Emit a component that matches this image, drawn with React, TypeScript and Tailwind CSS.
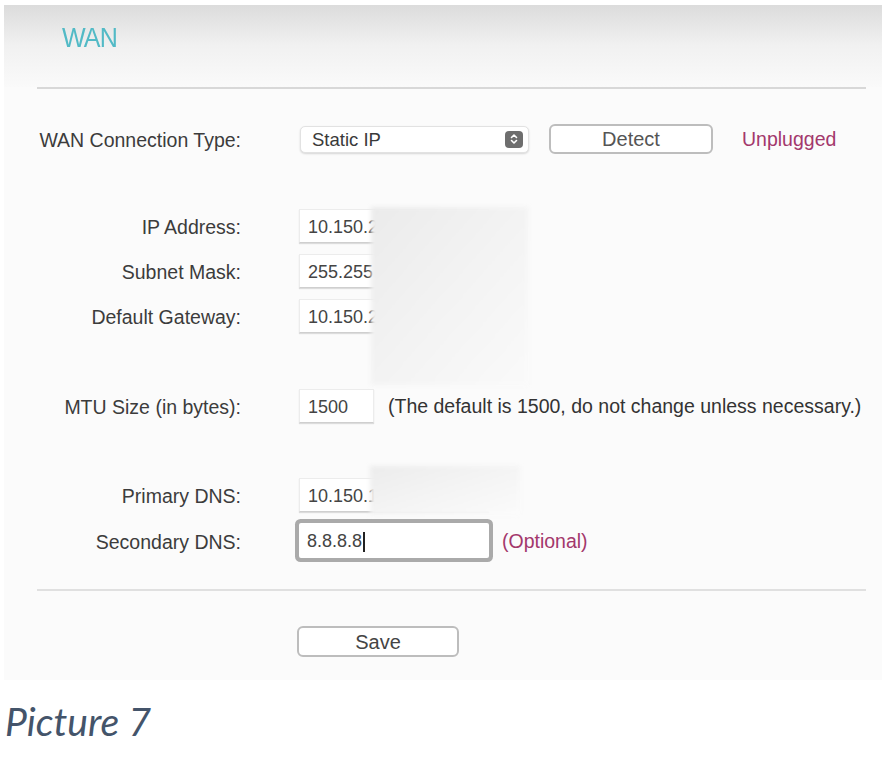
import React from "react";

const Label = ({ children }: { children: React.ReactNode }) => (
  <div className="w-[237px] shrink-0 text-right text-[19.5px] leading-none text-[#3c3c3c] relative top-[2px]">{children}</div>
);

const TextBox = ({ value, w = "w-[190px]" }: { value: string; w?: string }) => (
  <div
    className={`${w} h-[34px] ml-[58px] flex items-center pl-[8px] pt-[3px] bg-white border border-[#ececec] border-b-[#cfcfcf] shadow-[0_1px_1px_rgba(0,0,0,0.12)] text-[18px] text-[#444]`}
  >
    {value}
  </div>
);

export default function App() {
  return (
    <div
      className="w-[889px] h-[783px] bg-white relative overflow-hidden"
      style={{ fontFamily: '"Liberation Sans", Arial, sans-serif' }}
    >
      <div className="ml-[4px] mt-[5px] w-[878px] h-[675px] bg-[#fbfbfb] relative flex flex-col">
        {/* header gradient */}
        <div className="h-[82px] bg-gradient-to-b from-[#dcdcdc] via-[#f1f1f1] to-[#fafafa] flex items-center pl-[58px] pb-[17px]">
          <span className="text-[28.5px] leading-none text-[#52bac6] tracking-[-1px] scale-x-[0.88] origin-left inline-block">
            WAN
          </span>
        </div>
        <div className="ml-[33px] w-[829px] h-[2px] bg-[#d8d8d8]" />

        {/* Row 1 */}
        <div className="mt-[34px] h-[32px] flex items-center">
          <Label>WAN Connection Type:</Label>
          <div className="ml-[59px] w-[229px] h-[27px] rounded-[5px] bg-white border border-[#e2e2e2] shadow-[0_1px_2px_rgba(0,0,0,0.15)] flex items-center justify-between pl-[11px] pr-[5px]">
            <span className="text-[18.5px] text-[#3a3a3a] leading-none relative top-[1px]">Static IP</span>
            <div className="w-[18px] h-[17px] rounded-[4px] bg-[#6e6e6e] flex items-center justify-center">
              <svg width="10" height="12" viewBox="0 0 10 12" fill="none" stroke="white" strokeWidth="1.6" strokeLinecap="round" strokeLinejoin="round">
                <path d="M2.5 4.5 L5 2 L7.5 4.5" />
                <path d="M2.5 7.5 L5 10 L7.5 7.5" />
              </svg>
            </div>
          </div>
          <button className="ml-[20px] w-[164px] h-[30px] rounded-[6px] bg-white border-2 border-[#bdbdbd] text-[20px] text-[#555] leading-none">
            Detect
          </button>
          <span className="ml-[29px] text-[19.5px] text-[#a3386c] leading-none relative top-[1px]">Unplugged</span>
        </div>

        {/* IP rows */}
        <div className="mt-[54px] h-[34px] flex items-center">
          <Label>IP Address:</Label>
          <TextBox value="10.150.2" />
        </div>
        <div className="mt-[11px] h-[34px] flex items-center">
          <Label>Subnet Mask:</Label>
          <TextBox value="255.255" />
        </div>
        <div className="mt-[11px] h-[34px] flex items-center">
          <Label>Default Gateway:</Label>
          <TextBox value="10.150.2" />
        </div>

        {/* MTU */}
        <div className="mt-[56px] h-[34px] flex items-center">
          <Label>MTU Size (in bytes):</Label>
          <TextBox value="1500" w="w-[75px]" />
          <span className="ml-[14px] text-[19.5px] text-[#333] leading-none relative top-[1px]">
            (The default is 1500, do not change unless necessary.)
          </span>
        </div>

        {/* DNS */}
        <div className="mt-[55px] h-[34px] flex items-center">
          <Label>Primary DNS:</Label>
          <TextBox value="10.150.1" />
        </div>
        <div className="mt-[11px] h-[35px] flex items-center">
          <Label>Secondary DNS:</Label>
          <div className="ml-[58px] w-[190px] h-[35px] flex items-center pl-[8px] pt-[2px] bg-white rounded-[2px] ring-[4px] ring-[#aaaaaa] text-[18px] text-[#444]">
            8.8.8.8<span className="inline-block w-[1.5px] h-[20px] bg-[#222] ml-[1px]" />
          </div>
          <span className="ml-[13px] text-[19.5px] text-[#a3386c] leading-none relative top-[1px]">(Optional)</span>
        </div>

        <div className="mt-[31px] ml-[33px] w-[829px] h-[2px] bg-[#e0e0e0]" />

        <div className="mt-[35px] flex">
          <button className="ml-[293px] w-[162px] h-[31px] rounded-[6px] bg-white border-2 border-[#bdbdbd] text-[20px] text-[#444] leading-none">
            Save
          </button>
        </div>

        {/* blurred (redacted) areas */}
        <div className="absolute left-[367px] top-[202px] w-[157px] h-[178px] bg-gradient-to-br from-[#ebebeb] via-[#f3f3f3] to-[#fafafa] blur-[2px]" />
        <div className="absolute left-[366px] top-[461px] w-[150px] h-[49px] bg-gradient-to-br from-[#ececec] via-[#f4f4f4] to-[#fbfbfb] blur-[2px]" />
      </div>

      <div
        className="mt-[22px] ml-[5px] text-[39px] italic leading-none text-[#44546a]"
        style={{ fontFamily: 'Lato, sans-serif' }}
      >
        Picture 7
      </div>
    </div>
  );
}
